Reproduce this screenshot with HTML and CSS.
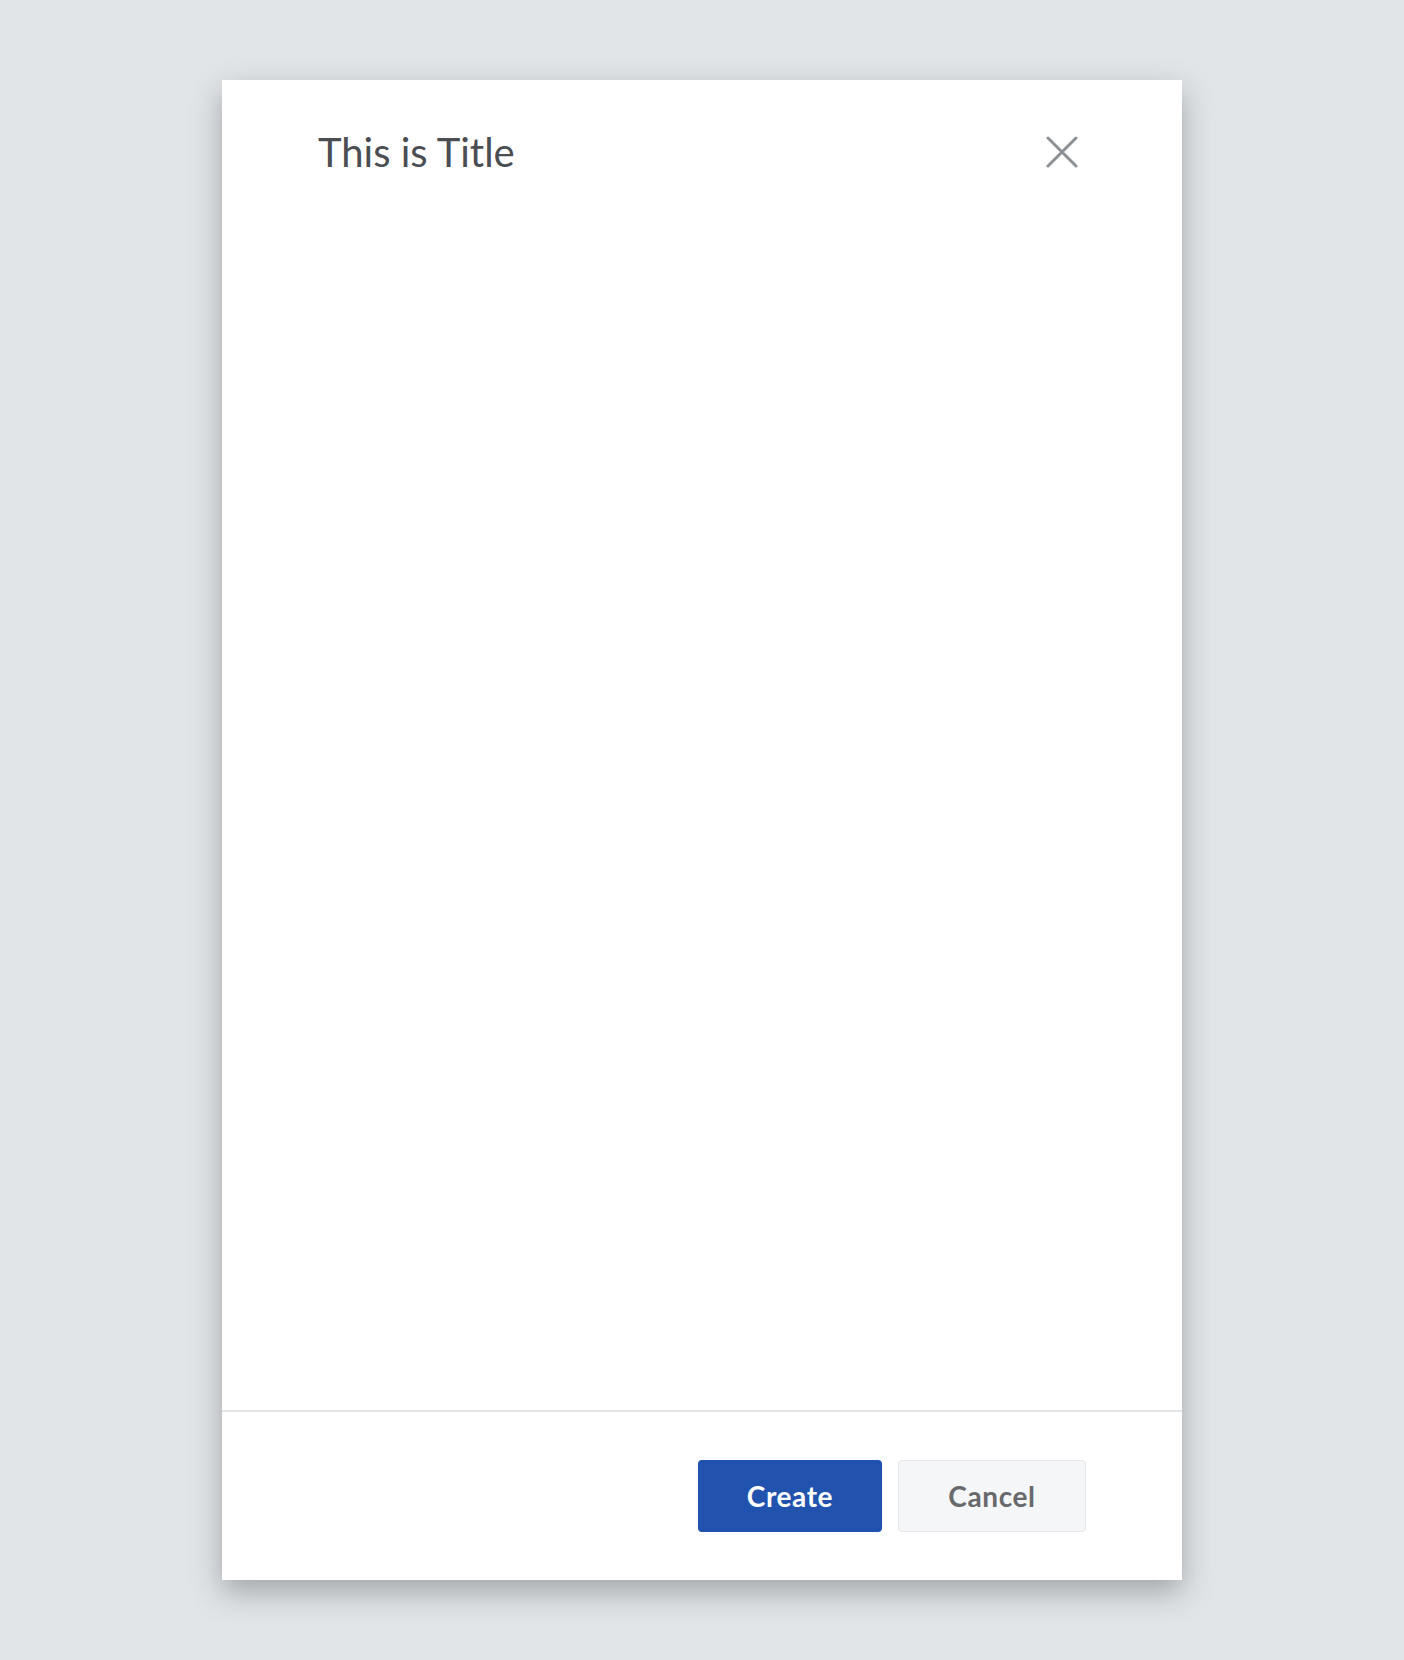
FILE: index.html
```html
<!DOCTYPE html>
<html>
<head>
<meta charset="utf-8">
<link rel="stylesheet" href="styles.css">
</head>
<body>
<div class="page">
  <div class="modal">
    <div class="modal-header">
      <h1 class="modal-title">This is Title</h1>
      <button class="close-btn" aria-label="Close">
        <svg width="32" height="32" viewBox="0 0 32 32"><path d="M2 2 L30 30 M30 2 L2 30" stroke="#8b9095" stroke-width="3" stroke-linecap="round" fill="none"/></svg>
      </button>
    </div>
    <div class="modal-body"></div>
    <div class="modal-footer">
      <button class="btn btn-primary">Create</button>
      <button class="btn btn-secondary">Cancel</button>
    </div>
  </div>
</div>
</body>
</html>
```
FILE: styles.css
```css
html, body {
  margin: 0;
  padding: 0;
}
body {
  background: #e1e5e8;
  font-family: Lato, "Noto Sans", sans-serif;
}
.page {
  height: 1660px;
  display: flex;
  justify-content: center;
  padding-top: 80px;
  box-sizing: border-box;
}
.modal {
  width: 960px;
  height: 1500px;
  background: #fff;
  box-shadow: 0 12px 28px rgba(40, 45, 50, 0.34);
  display: flex;
  flex-direction: column;
}
.modal-header {
  display: flex;
  justify-content: space-between;
  align-items: center;
  padding: 56px 104px 0 96px;
  height: 32px;
}
.modal-title {
  margin: 0;
  font-size: 40px;
  font-weight: 400;
  color: #4a4d52;
  line-height: 1;
}
.close-btn {
  width: 32px;
  height: 32px;
  padding: 0;
  border: none;
  background: none;
  display: block;
}
.close-btn svg { display: block; }
.modal-body {
  flex: 1;
  border-bottom: 2px solid #e3e6e9;
}
.modal-footer {
  display: flex;
  justify-content: flex-end;
  gap: 16px;
  padding: 48px 96px 48px 0;
}
.btn {
  height: 72px;
  border-radius: 4px;
  font-family: Lato, "Noto Sans", sans-serif;
  font-size: 28px;
  font-weight: 700;
  letter-spacing: 0.6px;
  box-sizing: border-box;
  padding: 0;
}
.btn-primary {
  width: 184px;
  background: #2153ae;
  color: #fff;
  border: none;
}
.btn-secondary {
  width: 188px;
  background: #f5f6f8;
  color: #67696c;
  border: 1px solid #e6e8eb;
}
```
